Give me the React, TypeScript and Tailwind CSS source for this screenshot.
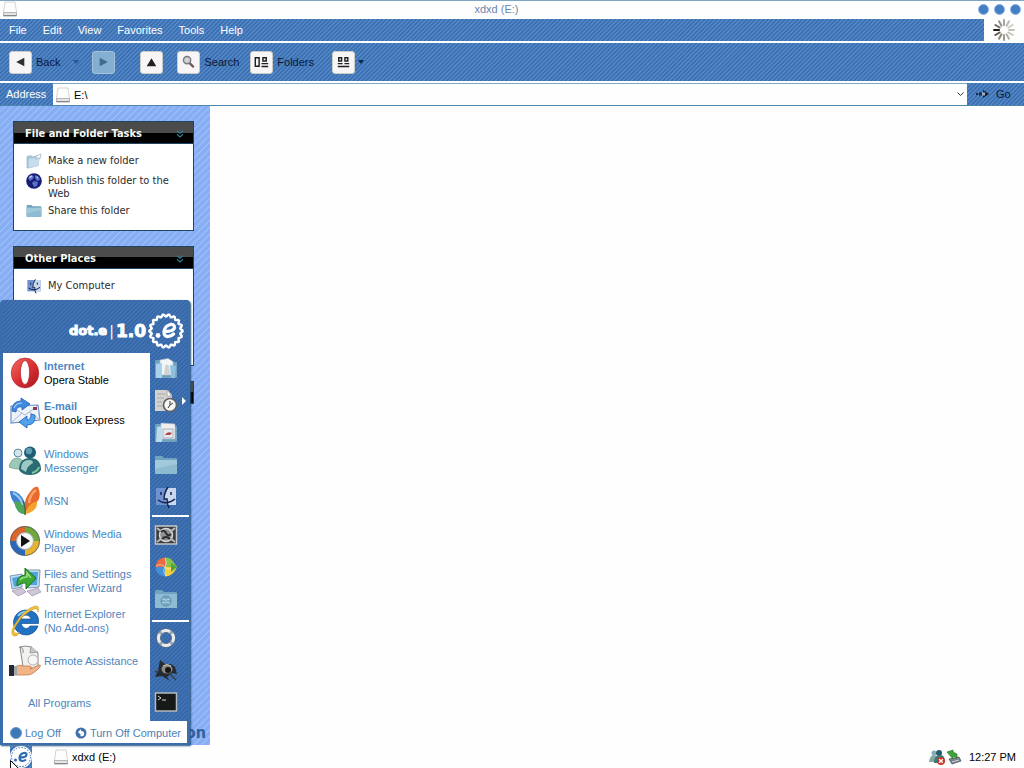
import React from 'react';

const STRIPE =
  'bg-[#3e72b6] bg-[repeating-linear-gradient(135deg,#3b70b5_0px,#3b70b5_1px,#5e90c8_2px,#3b70b5_3px)]';
const MENU_STRIPE =
  'bg-[#3a69aa] bg-[repeating-linear-gradient(135deg,#3567a9_0px,#3567a9_1px,#4879b7_2px,#3567a9_3px)]';
const PALE_STRIPE =
  'bg-[#86adf3] bg-[repeating-linear-gradient(135deg,#87adf3_0px,#87adf3_3px,#a0c2fb_4px,#87adf3_5px)]';

type IconProps = { className?: string };

function DriveIcon({ className = 'size-4' }: IconProps) {
  return (
    <svg viewBox="0 0 16 16" className={className} aria-hidden="true">
      <path d="M3 1h10l1.500 10v3.500h-13V11z" fill="#fdfdfd" stroke="#c9c9cc" strokeWidth=".8" />
      <path d="M1.500 11.500h13v3h-13z" fill="#e6e4e4" stroke="#a9a5aa" strokeWidth=".8" />
      <path d="M1.500 14.800h13" stroke="#77727a" />
    </svg>
  );
}

function Spinner() {
  const shades = ['#a8a49c', '#bcbab4', '#cfccc8', '#c4c0ba', '#c8c4bc', '#b4b0a8', '#9c988e', '#8a8478', '#5c5444', '#1e1a14', '#6c6860', '#96928a'];
  return (
    <svg viewBox="0 0 24 24" className="size-6" aria-hidden="true">
      {shades.map((c, i) => (
        <path key={i} d="M12 2V7" stroke={c} strokeWidth="2" strokeLinecap="round" transform={`rotate(${i * 30} 12 12)`} />
      ))}
    </svg>
  );
}

function Chevrons() {
  return (
    <svg viewBox="0 0 8 8" className="size-2" fill="none" stroke="#2e7f92" strokeWidth="1.300" aria-hidden="true">
      <path d="M1 .8l3 2.400 3-2.400M1 4.300l3 2.600 3-2.600" />
    </svg>
  );
}

function NewFolderIcon() {
  return (
    <svg viewBox="0 0 16 16" className="size-4" aria-hidden="true">
      <path d="M1 3.500l4-1 1.500 1.500 6-1.500v10L3 15H1z" fill="#a9c9dc" stroke="#8cabc0" strokeWidth=".6" />
      <path d="M3 6l11-1.500L12.500 13 2.500 15z" fill="#c6deec" />
      <path d="M10 3l5-2-1 5-1.500-1.500-2 2z" fill="#f7fbfd" stroke="#8ba2b7" strokeWidth=".6" />
    </svg>
  );
}

function GlobeIcon() {
  return (
    <svg viewBox="0 0 16 16" className="size-4" aria-hidden="true">
      <circle cx="8" cy="8" r="7.800" fill="#1a1c74" />
      <path d="M2 5l3-3 3 1-1 3-3 2zM9 2l4 2 1 3-3 1-2-3zM8 8l4 1-1 4-3 1-2-4z" fill="#5473c8" />
      <path d="M3 4l2-1.500 1.500.5L4 5.500zM10 3l2 1v2z" fill="#c0d2f6" />
    </svg>
  );
}

function FolderIcon({ className = 'size-4', mark }: IconProps & { mark?: 'doc' | 'picture' | 'globe' }) {
  return (
    <svg viewBox="0 0 24 24" className={className} aria-hidden="true">
      <path d="M1 4q0-1 1-1h6l2 2h12q1 0 1 1v14q0 1-1 1H2q-1 0-1-1z" fill="#6fa3bf" />
      {mark === 'doc' && (
        <>
          <path d="M6 3l8-1.500 5 3V18H6z" fill="#f3f6f8" stroke="#a9bccb" strokeWidth=".6" />
          <path d="M2 7l6-1v15H2z" fill="#a9d2ea" />
          <path d="M11 9q2-3 4 0l1 9h-6z" fill="#cfd1d2" />
          <path d="M16 8l6 1-1 12h-4z" fill="#8fc0dd" />
        </>
      )}
      {mark === 'picture' && (
        <>
          <path d="M7 2l14 1v15H7z" fill="#f1eeee" stroke="#abbacc" strokeWidth=".6" />
          <path d="M3 6l5-1v16H2z" fill="#bbdcec" />
          <path d="M9 8h10v9H9z" fill="#e4e9ef" stroke="#8e9bad" strokeWidth=".7" />
          <path d="M11 14q2-4 7-2l-2 2z" fill="#b5443e" />
        </>
      )}
      {(!mark || mark === 'globe') && <path d="M1 7h22v13q0 1-1 1H2q-1 0-1-1z" fill="#8dbcd2" />}
      {!mark && <path d="M1 7h22v4Q12 13 1 16z" fill="#a0c9da" />}
      {mark === 'globe' && (
        <>
          <circle cx="12" cy="14" r="5" fill="#7ba7c6" stroke="#5b8cb2" />
          <path d="M8 12q4 2 8 0M8 16q4-2 8 0" stroke="#b4d5e5" fill="none" />
        </>
      )}
    </svg>
  );
}

function FinderIcon({ className = 'size-4' }: IconProps) {
  return (
    <svg viewBox="0 0 24 24" className={className} aria-hidden="true">
      <path d="M2 3h20v17H2z" fill="#6f92d0" />
      <path d="M13 3h9v17h-9q-1-3-1-6h-3q1-7 4-11z" fill="#c9d7ef" />
      <path d="M14 2q-4 6-4 12h3q0 5 2 9M4 15q8 6 17-1M7 7v3M17 7v3" fill="none" stroke="#15224e" strokeWidth="1.500" />
    </svg>
  );
}

function OperaIcon() {
  return (
    <svg viewBox="0 0 32 32" className="size-8" aria-hidden="true">
      <defs>
        <linearGradient id="opera" x1="0" y1="0" x2="1" y2="1">
          <stop offset="0" stopColor="#ee6e66" />
          <stop offset=".5" stopColor="#dc2f34" />
          <stop offset="1" stopColor="#a3181d" />
        </linearGradient>
      </defs>
      <ellipse cx="16" cy="16" rx="13.800" ry="15" fill="url(#opera)" stroke="#b32126" strokeWidth=".6" />
      <ellipse cx="16" cy="15.500" rx="4.600" ry="12" fill="#fff" stroke="#b5262b" strokeWidth=".8" />
    </svg>
  );
}

function MailIcon() {
  return (
    <svg viewBox="0 0 32 32" className="size-8" aria-hidden="true">
      <path d="M2 9l27-1 2 15-29 3z" fill="#eef3fb" stroke="#6f92c4" strokeWidth="1.200" />
      <path d="M3 10l13 8L29 9M3 25l10-9M30 22l-10-7" fill="none" stroke="#a7b8d0" />
      <path d="M24 10h4v3h-4z" fill="#8a3a4a" />
      <path d="M3 14Q3 4 12 4V1l9 6-8 6v-3q-6-1-6 5z" fill="#3f8be0" stroke="#1f5cb2" strokeWidth=".8" />
      <path d="M26 18q1 10-8 10v3l-8-6 8-6v4q4 0 4-6z" fill="#51a2ec" stroke="#1f5cb2" strokeWidth=".8" />
      <path d="M5 11q2-5 8-5" fill="none" stroke="#a9d3fa" strokeWidth="1.200" />
    </svg>
  );
}

function MessengerIcon() {
  return (
    <svg viewBox="0 0 32 32" className="size-8" aria-hidden="true">
      <circle cx="9" cy="8" r="4" fill="#d3e4ec" stroke="#527f96" strokeWidth=".9" />
      <path d="M0 22q2-9 8-9t9 9q-8 4-17 0z" fill="#9cc8b6" stroke="#5b8f7c" strokeWidth=".6" />
      <circle cx="21" cy="7.500" r="6" fill="#1f5f76" />
      <circle cx="20" cy="6" r="3.200" fill="#5f9db0" />
      <path d="M10 25q0-12 11-12t11 12q-3 5-11 5t-11-5z" fill="#2a6c74" />
      <path d="M12 24q0-9 8-9 4 0 4 3-6 3-7 9z" fill="#9ec8c4" />
      <path d="M23 28q6-2 7-6" stroke="#82c59b" fill="none" strokeWidth="2" />
    </svg>
  );
}

function MsnIcon() {
  return (
    <svg viewBox="0 0 32 32" className="size-8" aria-hidden="true">
      <path d="M1 6q10-1 15 12v10Q9 24 6 19 1 13 1 6z" fill="#3f83cf" />
      <path d="M5 17q7-2 11 5v7Q8 30 5 17z" fill="#4fa65a" />
      <path d="M16 27q-2-12 5-20 4-6 8-5 4 9-1 15z" fill="#ea6a2e" />
      <path d="M17 29q0-9 11-13 1 10-11 13z" fill="#f2a52c" />
      <path d="M4 8q7 3 10 12" stroke="#9dcaf3" fill="none" strokeWidth="2" />
      <path d="M20 18q1-9 7-13" stroke="#f9a16b" fill="none" strokeWidth="2.500" />
      <path d="M14 16q3 7 2 14" stroke="#376f45" fill="none" strokeWidth="1.500" />
    </svg>
  );
}

function MediaPlayerIcon() {
  return (
    <svg viewBox="0 0 32 32" className="size-8" aria-hidden="true">
      <path d="M16 16V1A15 15 0 0 0 1 16z" fill="#d9662a" />
      <path d="M16 16V1a15 15 0 0 1 15 15z" fill="#71a83c" />
      <path d="M16 16h15a15 15 0 0 1-15 15z" fill="#e9b42b" />
      <path d="M16 16v15A15 15 0 0 1 1 16z" fill="#2b68ba" />
      <circle cx="16" cy="16" r="14.500" fill="none" stroke="#56616b" strokeOpacity=".8" />
      <circle cx="16" cy="16" r="8.500" fill="#f7f8f8" stroke="#a4abb0" />
      <path d="M12 10l9 6-9 6z" fill="#111" />
    </svg>
  );
}

function TransferIcon() {
  return (
    <svg viewBox="0 0 32 32" className="size-8" aria-hidden="true">
      <path d="M1 11l12-2v13L3 24zM18 5h13l-1 17-11 1z" fill="#c3def2" stroke="#7d98b3" />
      <path d="M3 13l9-2v9l-7 2zM20 7h9l-1 13h-8z" fill="#4fa3df" />
      <path d="M3 26l10-3 4 4-8 4zM18 26l11-3 3 4-9 4z" fill="#cfc7d8" stroke="#8c7f99" strokeWidth=".6" />
      <path d="M8 21q-1-10 8-11V3l11 10-10 11v-6q-5-1-9 3z" fill="#3fa936" stroke="#18731b" />
      <path d="M11 15q2-3 7-3V8l4 5" fill="none" stroke="#9bde83" strokeWidth="1.500" />
    </svg>
  );
}

function ExplorerIcon() {
  return (
    <svg viewBox="0 0 32 32" className="size-8" aria-hidden="true">
      <path d="M17 5a12.500 12.500 0 1 0 12 16h-8q-1.500 3-4.500 2.500T12 18.500h17.500Q31 6 17 5zM12 14q1-4 5-4t5 4z" fill="#2172c3" stroke="#174f8e" strokeWidth=".7" />
      <path d="M9 11q4-5 10-4" stroke="#8ac9f5" strokeWidth="2" fill="none" />
      <path d="M5 31Q0 29 6 19 15 4 26 1q5-1 3 6 0-4-4-3Q15 8 8 19q-5 8-2 9 2 1 5-1-3 5-6 4z" fill="#eec137" stroke="#c1902a" strokeWidth=".5" />
    </svg>
  );
}

function AssistanceIcon() {
  return (
    <svg viewBox="0 0 32 32" className="size-8" aria-hidden="true">
      <path d="M11 2q6-2 11 0l7 6v14q-5 3-15 0z" fill="#f1f1f0" stroke="#8b8985" />
      <path d="M22 1l-1 7 8-1" fill="#c7c5c3" stroke="#8b8985" strokeWidth=".7" />
      <path d="M10 2q5 0 4 6" fill="none" stroke="#8b8985" />
      <circle cx="24" cy="15" r="5" fill="#f6f6f4" stroke="#b5b3ad" />
      <path d="M5 22q6-3 10-1h6q3 1 0 3l9-4q3 0 0 3-7 8-14 7H5z" fill="#f1b486" stroke="#b86f45" strokeWidth=".7" />
      <path d="M0 20h5v11H0z" fill="#252a32" />
      <path d="M5 21h3v9H5z" fill="#9ca7ae" />
    </svg>
  );
}

function RecentIcon() {
  return (
    <svg viewBox="0 0 24 24" className="size-6" aria-hidden="true">
      <path d="M1 1h13l4 5v16H1z" fill="#d2d2ce" />
      <path d="M13 1l5 6h-5zM3 5h8M3 9h7M3 13h5M3 17h6" fill="#fff" stroke="#aaa9a5" />
      <circle cx="16" cy="16" r="6.500" fill="#f7f6f2" stroke="#5f6063" strokeWidth="1.600" />
      <path d="M16 12v4l3-2M16 16l-2 3" stroke="#3a3a3c" fill="none" />
    </svg>
  );
}

function SystemIcon() {
  return (
    <svg viewBox="0 0 24 24" className="size-6" aria-hidden="true">
      <path d="M1.500 3h21v18h-21z" fill="#3c3d3e" stroke="#c4c6c7" strokeWidth="1.500" />
      <circle cx="12" cy="12" r="6.500" fill="#8e9091" stroke="#d7d8d8" strokeWidth="1.500" />
      <path d="M3 5l5 4M21 5l-5 4M3 19l5-4M21 19l-5-4" stroke="#b9bbbb" strokeWidth="2" fill="none" />
      <path d="M7 9q3-3 5 1 2 4 5 1M8 16q4-4 8 0" stroke="#2c2d2e" strokeWidth="1.800" fill="none" />
    </svg>
  );
}

function ProgramsBallIcon() {
  return (
    <svg viewBox="0 0 24 24" className="size-6" aria-hidden="true">
      <path d="M11 12V2.500A9.500 9.500 0 0 0 1.500 12z" fill="#ea6a43" />
      <path d="M11 12V2.500q6 0 8 4l4 5.500z" fill="#8ac34b" />
      <path d="M11 12h12q-4 9.500-12 9.500z" fill="#f2d03f" />
      <path d="M11 12v9.500A9.500 9.500 0 0 1 1.500 12z" fill="#448fd5" />
      <path d="M2 11q5-3 9 1t8 0M11 3q3 5 0 9t1 9" stroke="#f2f5dd" strokeOpacity=".6" fill="none" />
      <path d="M17 8l6 4-6 5z" fill="#4da43e" />
    </svg>
  );
}

function LifebuoyIcon() {
  return (
    <svg viewBox="0 0 24 24" className="size-6" aria-hidden="true">
      <circle cx="12" cy="12" r="7.500" fill="none" stroke="#e8ecee" strokeWidth="3.600" />
      <circle cx="12" cy="12" r="7.500" fill="none" stroke="#9aa6af" strokeWidth="3.600" strokeDasharray="3 8.781" strokeDashoffset="-4" />
      <circle cx="12" cy="12" r="9.600" fill="none" stroke="#56687c" strokeWidth=".8" />
      <circle cx="12" cy="12" r="5.500" fill="none" stroke="#56687c" strokeWidth=".8" />
    </svg>
  );
}

function SearchBugIcon() {
  return (
    <svg viewBox="0 0 24 24" className="size-6" aria-hidden="true">
      <path d="M6 2l5 4 6 0 4 3 2 7-5-1-5 4 3 4-8-5-7 1 3-6z" fill="#272b31" />
      <ellipse cx="13" cy="11" rx="5.500" ry="4.500" fill="#8c8c80" />
      <circle cx="14" cy="12" r="3" fill="#131518" />
      <path d="M9 8q4-3 8 0" stroke="#cbc9b8" fill="none" />
      <path d="M16 16l6 6M5 13l-4 1" stroke="#3a414d" strokeWidth="1.500" />
    </svg>
  );
}

function TerminalIcon() {
  return (
    <svg viewBox="0 0 24 24" className="size-6" aria-hidden="true">
      <path d="M1.500 3h21v18h-21z" fill="#171918" stroke="#b3b9bb" strokeWidth="1.500" />
      <path d="M4 6l3 2-3 2M8 10h4" stroke="#d3d8d4" fill="none" />
    </svg>
  );
}

const scallops = Array.from({ length: 144 }, (_, i) => {
  const angle = (i / 144) * Math.PI * 2;
  const radius = 15.6 + 1.1 * Math.cos(angle * 18);
  return `${(18 + radius * Math.cos(angle)).toFixed(2)},${(18 + radius * Math.sin(angle)).toFixed(2)}`;
}).join(' ');

function Emblem({ className = 'size-9', ring = '#fff' }: IconProps & { ring?: string }) {
  return (
    <svg viewBox="0 0 36 36" className={className} aria-hidden="true">
      <polygon points={scallops} fill="none" stroke={ring} strokeWidth="2.400" />
      <circle cx="10" cy="22.500" r="2.400" fill={ring} />
      <path d="M16.500 18.500Q26 18.500 26.500 14.500q0-3.500-4-3-5.500 1-6.500 7-.3 5 4 5 3 0 5.500-2.500" fill="none" stroke={ring} strokeWidth="3.300" strokeLinecap="round" />
    </svg>
  );
}

type ToolKind = 'back' | 'forward' | 'up' | 'search' | 'folders' | 'views';

function ToolGlyph({ kind }: { kind: ToolKind }) {
  return (
    <svg viewBox="0 0 22 22" className="size-[22px]" fill="none" stroke="#202020" strokeWidth="1.500" aria-hidden="true">
      {kind === 'back' && <path d="M15 6.500v9L6.500 11z" fill="#2f3032" stroke="none" />}
      {kind === 'forward' && <path d="M7 6.500v9l8.500-4.500z" fill="#416b88" stroke="none" />}
      {kind === 'up' && <path d="M6 15.500h10L11 7z" fill="#202123" stroke="none" />}
      {kind === 'search' && (
        <>
          <path d="M12 12l4.500 4.500" stroke="#6d5a58" strokeWidth="2.500" />
          <circle cx="9.500" cy="9" r="3.800" fill="#cfd3d5" stroke="#777a7e" />
        </>
      )}
      {kind === 'folders' && <path d="M4.500 6.500h4v9h-4zM12.500 6.500h3.500v3.500h-3.500zM11 12.700h7M11 15.700h7" />}
      {kind === 'views' && <path d="M6 6.500h3v3.500h-3zM12.500 6.500h3v3.500h-3zM5 12.700h5M12 12.700h5M5 15.700h12" />}
    </svg>
  );
}

function ToolButton({ kind, label, className = '' }: { kind: ToolKind; label?: string; className?: string }) {
  const face = kind === 'forward' ? 'bg-[#85afd2] border-[#a5c2d6]' : 'bg-[#f7f5f5] border-[#c9cbc9]';
  return (
    <button type="button" aria-label={label ?? kind} className={`flex items-center gap-1 text-[#0b1a38] ${className}`}>
      <span className={`flex size-[23px] items-center justify-center rounded-[3px] border ${face}`}>
        <ToolGlyph kind={kind} />
      </span>
      {label && <span>{label}</span>}
    </button>
  );
}

function TaskPanel({ title, open = true, className = '', children }: { title: string; open?: boolean; className?: string; children?: React.ReactNode }) {
  return (
    <section className={`border border-[#1d4566] bg-white ${className}`}>
      <button
        type="button"
        aria-label={title}
        aria-expanded={open}
        className="flex h-[21px] w-full items-center justify-between bg-linear-to-b from-[#4b4b4b] from-50% to-black to-50% pt-[2px] pr-[9px] pl-[11px] text-[11px] font-bold text-[#f4f8f4]"
      >
        {open && title}
        <Chevrons />
      </button>
      {children && <ul className="flex flex-col gap-1 border-t border-[#1d4566] px-3 pt-[10px]">{children}</ul>}
    </section>
  );
}

function TaskLink({ icon, children }: { icon: React.ReactNode; children: React.ReactNode }) {
  return (
    <li>
      <a href="#" className="flex min-h-4 items-start gap-[6px] text-[11px] leading-[13px] text-[#2c2c2c]">
        <span className="-mt-px -mb-1 shrink-0">{icon}</span>
        <span>{children}</span>
      </a>
    </li>
  );
}

const programs: { name: string; Icon: () => React.ReactElement }[] = [
  { name: 'Windows Messenger', Icon: MessengerIcon },
  { name: 'MSN', Icon: MsnIcon },
  { name: 'Windows Media Player', Icon: MediaPlayerIcon },
  { name: 'Files and Settings Transfer Wizard', Icon: TransferIcon },
  { name: 'Internet Explorer (No Add-ons)', Icon: ExplorerIcon },
  { name: 'Remote Assistance', Icon: AssistanceIcon },
];

function PinnedItem({ icon, title, name }: { icon: React.ReactNode; title: string; name: string }) {
  return (
    <li>
      <a href="#" className="flex h-10 items-center gap-[3px]">
        {icon}
        <span className="flex flex-col leading-[14px] whitespace-nowrap">
          <b className="text-[#4f88c6]">{title}</b>
          <span className="text-black">{name}</span>
        </span>
      </a>
    </li>
  );
}

function PlaceButton({ label, children }: { label: string; children: React.ReactNode }) {
  return (
    <button type="button" aria-label={label} className="flex h-8 w-full items-center pl-1">
      {children}
    </button>
  );
}

function StartMenu() {
  return (
    <nav
      aria-label="Start menu"
      className={`absolute bottom-full left-0 w-[190px] rounded-t-[4px] border-r-[3px] border-b-2 border-l-[3px] border-[#396dab] shadow-[1px_1px_2px_#24507c] ${MENU_STRIPE}`}
    >
      <header className="flex h-[53px] items-center justify-end gap-[2px] pt-2 pr-[3px] font-['DejaVu_Sans',sans-serif] font-bold text-white">
        <span className="text-[13px] [-webkit-text-stroke:1px_white]">dot.e</span>
        <span className="text-[14px] font-normal">|</span>
        <span className="text-[17px] [-webkit-text-stroke:1px_white]">1.0</span>
        <Emblem />
      </header>
      <div className="flex">
        <div className="flex-1 bg-white pl-[6px]">
          <ul>
            <PinnedItem icon={<OperaIcon />} title="Internet" name="Opera Stable" />
            <PinnedItem icon={<MailIcon />} title="E-mail" name="Outlook Express" />
          </ul>
          <ul className="pt-2">
            {programs.map(({ name, Icon }) => (
              <li key={name}>
                <a href="#" className="flex h-10 items-center gap-[3px] leading-[14px] text-[#4c86c0]">
                  <Icon />
                  <span className="w-[100px]">{name}</span>
                </a>
              </li>
            ))}
          </ul>
          <button type="button" className="flex h-10 items-center pt-1 pl-[19px] text-[#4c86c0]">
            All Programs
          </button>
        </div>
        <div className="flex w-[37px] shrink-0 flex-col">
          <PlaceButton label="My Documents"><FolderIcon className="size-6" mark="doc" /></PlaceButton>
          <PlaceButton label="Recent Documents">
            <RecentIcon />
            <svg viewBox="0 0 4 8" className="ml-1 h-2 w-1" aria-hidden="true"><path d="M0 0l4 4-4 4z" fill="#fff" /></svg>
          </PlaceButton>
          <PlaceButton label="My Pictures"><FolderIcon className="size-6" mark="picture" /></PlaceButton>
          <PlaceButton label="My Music"><FolderIcon className="size-6" /></PlaceButton>
          <PlaceButton label="My Computer"><FinderIcon className="size-6" /></PlaceButton>
          <hr className="my-[2px] -mr-[2px] ml-[2px] h-[2px] border-0 bg-white" />
          <PlaceButton label="Control Panel"><SystemIcon /></PlaceButton>
          <PlaceButton label="Program Access"><ProgramsBallIcon /></PlaceButton>
          <PlaceButton label="Network"><FolderIcon className="size-6" mark="globe" /></PlaceButton>
          <hr className="mt-[5px] -mr-[2px] ml-[2px] h-[2px] border-0 bg-white" />
          <PlaceButton label="Help"><LifebuoyIcon /></PlaceButton>
          <PlaceButton label="Find"><SearchBugIcon /></PlaceButton>
          <PlaceButton label="Run"><TerminalIcon /></PlaceButton>
        </div>
      </div>
      <footer className="flex h-[22px] items-center gap-[14px] bg-white pt-[2px] pl-[7px] whitespace-nowrap text-[#4c7fb5]">
        <button type="button" className="flex items-center gap-[3px]">
          <span className="size-3 rounded-full border border-[#6a9acb] bg-[#3c77b8]" />
          Log Off
        </button>
        <button type="button" className="flex items-center gap-[3px]">
          <svg viewBox="0 0 12 12" className="size-3" aria-hidden="true">
            <circle cx="6" cy="6" r="5.500" fill="#3f70ae" />
            <path d="M3 5l3-3v2q4 0 3 4-1 2-4 1 2-1 1-3v2z" fill="#fff" />
          </svg>
          Turn Off Computer
        </button>
      </footer>
    </nav>
  );
}

export default function App() {
  return (
    <div className="flex min-h-screen flex-col bg-[#fefefe] font-['Liberation_Sans',Arial,sans-serif] text-[11px] leading-[14px]">
      <header className="flex h-[19px] items-center border-t border-[#7ba6c6] pr-[3px] pb-[2px] pl-[2px]">
        <div className="flex-1"><DriveIcon /></div>
        <h1 className="pr-[30px] text-[#6985b0]">xdxd (E:)</h1>
        <div className="flex flex-1 justify-end gap-[5px]">
          {['Minimize', 'Maximize', 'Close'].map((label) => (
            <button key={label} type="button" aria-label={label} className="size-[11px] rounded-full border border-[#8db4e2] bg-[#447fc6]" />
          ))}
        </div>
      </header>

      <div className="flex h-[22px]">
        <nav aria-label="Menu bar" className={`flex flex-1 items-center pl-px text-white ${STRIPE}`}>
          {['File', 'Edit', 'View', 'Favorites', 'Tools', 'Help'].map((item) => (
            <button key={item} type="button" className="h-full px-2">{item}</button>
          ))}
        </nav>
        <div className="flex w-10 items-center justify-center"><Spinner /></div>
      </div>

      <div className={`mt-[2px] flex h-[38px] items-center pl-[9px] ${STRIPE}`}>
        <ToolButton kind="back" label="Back" />
        <button type="button" aria-label="Back history" className="mx-[13px] text-[#2b5590]">
          <svg viewBox="0 0 6 4" className="h-1 w-[6px]" aria-hidden="true"><path d="M0 0h6L3 4z" fill="currentColor" /></svg>
        </button>
        <ToolButton kind="forward" />
        <ToolButton kind="up" className="ml-[25px]" />
        <ToolButton kind="search" label="Search" className="ml-[14px]" />
        <ToolButton kind="folders" label="Folders" className="ml-[11px]" />
        <ToolButton kind="views" className="ml-[18px]" />
        <svg viewBox="0 0 6 4" className="ml-[3px] h-1 w-[6px]" aria-hidden="true"><path d="M0 0h6L3 4z" fill="#0d2850" /></svg>
      </div>

      <form className={`mt-[2px] flex h-[23px] border-b border-[#4f84ab] ${STRIPE}`} onSubmit={(e) => e.preventDefault()}>
        <label htmlFor="address" className="flex w-[53px] items-center pl-[6px] text-white">Address</label>
        <div className="flex flex-1 items-center gap-[3px] border-t border-[#7ba6c6] bg-[#fefefe] pr-[3px] pl-[2px]">
          <DriveIcon />
          <input id="address" defaultValue="E:\" className="min-w-0 flex-1 text-black outline-none" />
          <button type="button" aria-label="Show addresses">
            <svg viewBox="0 0 7 5" className="h-[5px] w-[7px]" aria-hidden="true"><path d="M.5.5l3 3 3-3" fill="none" stroke="#333" /></svg>
          </button>
        </div>
        <button type="submit" className="flex w-[57px] items-center gap-[6px] pl-[9px] text-[#0b1a38]">
          <svg viewBox="0 0 14 8" className="h-2 w-[14px] shrink-0" aria-hidden="true">
            <path d="M0 3h2v2H0zM3 2.500h3v3H3z" fill="#1d2c44" />
            <path d="M7 0l6 4-6 4z" fill="#15202e" />
            <path d="M6 2.500h3v3H6z" fill="#9fb0c4" />
          </svg>
          Go
        </button>
      </form>

      <main className="flex flex-1">
        <aside className={`flex w-[210px] flex-col pt-[15px] pr-4 pl-[13px] font-['DejaVu_Sans_Condensed','DejaVu_Sans',Tahoma,sans-serif] ${PALE_STRIPE}`}>
          <TaskPanel title="File and Folder Tasks" className="h-[110px]">
            <TaskLink icon={<NewFolderIcon />}>Make a new folder</TaskLink>
            <TaskLink icon={<GlobeIcon />}>Publish this folder to the Web</TaskLink>
            <TaskLink icon={<FolderIcon />}>Share this folder</TaskLink>
          </TaskPanel>
          <TaskPanel title="Other Places" className="mt-[15px] h-[120px]">
            <TaskLink icon={<FinderIcon />}>My Computer</TaskLink>
          </TaskPanel>
          <TaskPanel title="Details" open={false} className="mt-[15px]" />
          <p className="mt-auto -mr-3 pb-[3px] text-right text-[16px] leading-[18px] font-bold text-[#345f9e]">on</p>
        </aside>
      </main>

      <footer className="relative flex h-[23px] items-center">
        <StartMenu />
        <button type="button" aria-label="Start" className={`relative ml-[10px] flex size-[22px] items-center justify-center ${STRIPE}`}>
          <span className="flex size-[22px] items-center justify-center rounded-full bg-white">
            <svg viewBox="0 0 22 22" className="size-[22px]" fill="none" stroke="#2f6ab3" aria-hidden="true">
              <circle cx="11" cy="11" r="9.500" strokeWidth="1" strokeDasharray="1.500 1.500" />
              <circle cx="5.500" cy="14" r="1.500" fill="#2f6ab3" stroke="none" />
              <path d="M10 11.500q6 0 6.500-2.500 0-2.500-3-2-3.500 1-4 4.500 0 3.500 3 3.500 2 0 3.500-1.500" strokeWidth="2.200" />
            </svg>
          </span>
          <svg viewBox="0 0 8 8" className="absolute bottom-0 left-0 size-2" aria-hidden="true">
            <path d="M.5 10V.5L8 8" fill="#fff" stroke="#111" />
          </svg>
        </button>
        <button type="button" className="ml-[21px] flex items-center gap-[3px] text-black">
          <DriveIcon />
          xdxd (E:)
        </button>
        <div className="ml-auto flex items-center gap-px pr-2 text-black">
          <svg viewBox="0 0 16 16" className="size-4" aria-hidden="true">
            <circle cx="5" cy="4" r="2.500" fill="#88acb3" />
            <path d="M0 13q1-7 5-7t4 7z" fill="#82aa9c" />
            <circle cx="10" cy="4" r="3" fill="#235a70" />
            <path d="M5 14q0-8 6-8t4 8z" fill="#3a7a7d" />
            <circle cx="12" cy="12" r="4" fill="#ca3929" />
            <path d="M10.200 10.200l3.600 3.600m0-3.600l-3.600 3.600" stroke="#fff" strokeWidth="1.300" />
          </svg>
          <svg viewBox="0 0 16 16" className="size-4" aria-hidden="true">
            <path d="M3 10l10-2 2 4-9 3z" fill="#7b828e" stroke="#424854" strokeWidth=".7" />
            <path d="M6 13l7-2" stroke="#d2d5da" />
            <path d="M1 3l6-2v2l4 2v4L7 7v3z" fill="#3fa23a" stroke="#216922" strokeWidth=".6" />
          </svg>
          <time className="pl-[6px]">12:27 PM</time>
        </div>
      </footer>
    </div>
  );
}
